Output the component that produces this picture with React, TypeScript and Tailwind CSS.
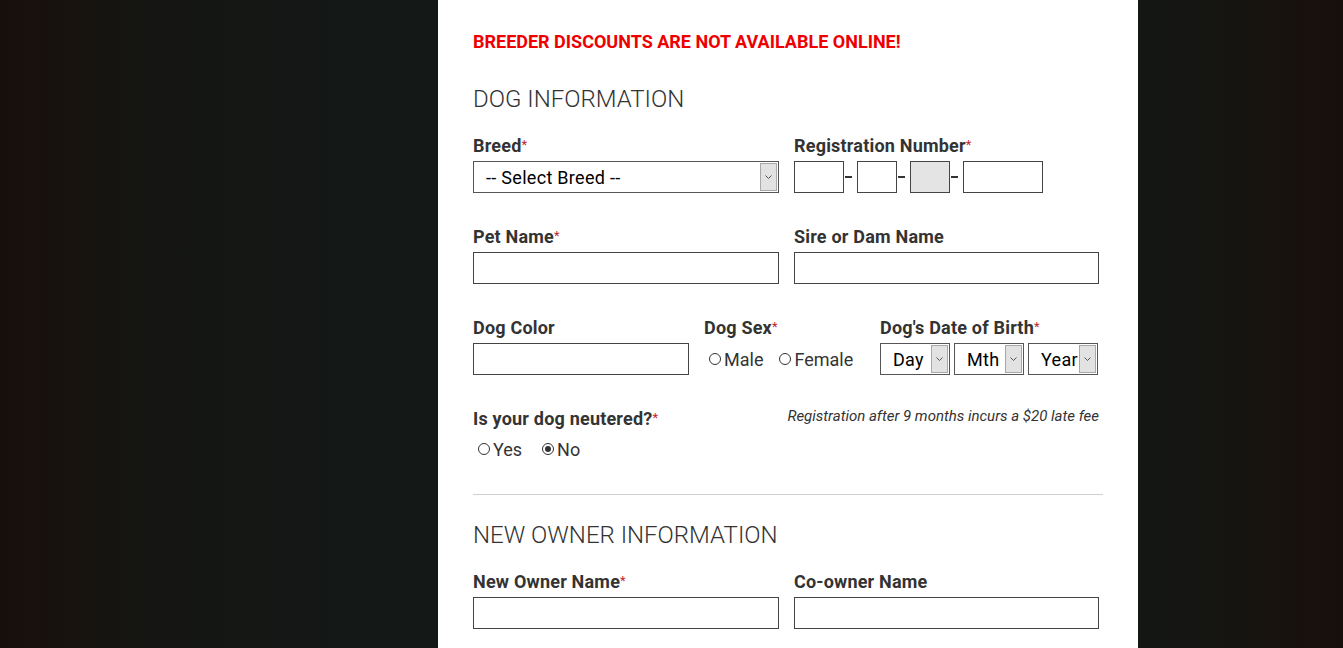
import React from 'react';

const font = { fontFamily: 'Roboto, "Noto Sans", sans-serif' };

function Req() {
  return <span className="text-[#c4262e] text-[13px] align-top relative top-[-1px] font-normal">*</span>;
}

function Label({ text, req }: { text: string; req?: boolean }) {
  return (
    <div className="h-5 leading-5 pt-px text-[18px] font-bold text-[#333] whitespace-nowrap tracking-[0.2px]">
      {text}
      {req && <Req />}
    </div>
  );
}

function TextBox({ className = '' }: { className?: string }) {
  return <div className={`h-8 border border-[#444] bg-white ${className}`} />;
}

function SelectBox({ text, className = '', pad = 'pl-3' }: { text: string; className?: string; pad?: string }) {
  return (
    <div className={`h-8 border border-[#555] bg-white flex items-stretch ${className}`}>
      <div className={`flex-1 flex items-center text-[18px] text-black tracking-[0.3px] ${pad}`}>{text}</div>
      <div className="w-[17px] my-px mr-px bg-[#e2e2e2] border border-[#a8a8a8] flex items-center justify-center">
        <svg width="7" height="4" viewBox="0 0 7 4" fill="none">
          <path d="M0.5 0.5L3.5 3.5L6.5 0.5" stroke="#555" strokeWidth="1" />
        </svg>
      </div>
    </div>
  );
}

function Radio({ label, checked }: { label: string; checked?: boolean }) {
  return (
    <div className="flex items-center text-[18px] text-[#333]">
      <span className="w-3 h-3 rounded-full border border-[#333] flex items-center justify-center mr-[3px]">
        {checked && <span className="w-[6px] h-[6px] rounded-full bg-[#333]" />}
      </span>
      {label}
    </div>
  );
}

function Dash() {
  return <div className="w-[13px] flex items-center"><div className="ml-px w-[7px] h-[2px] bg-[#333]" /></div>;
}

export default function App() {
  return (
    <div
      className="min-h-[648px] w-full flex pl-[438px] bg-[linear-gradient(to_right,#180f0b_0%,#151613_11%,#141817_28%,#141817_72%,#151613_89%,#180f0b_100%)]"
      style={font}
    >
      <div className="w-[700px] bg-white px-[35px] pt-[32px] pb-5">
        <div className="h-5 leading-5 text-[18px] font-bold text-[#ee0000]">BREEDER DISCOUNTS ARE NOT AVAILABLE ONLINE!</div>

        <h2 className="mt-[31px] h-8 leading-8 text-[24px] font-light text-[#333]">DOG INFORMATION</h2>

        <div className="mt-5 grid grid-cols-[306px_305px] gap-x-[15px]">
          <div>
            <Label text="Breed" req />
            <SelectBox text="-- Select Breed --" className="mt-[6px]" />
          </div>
          <div>
            <Label text="Registration Number" req />
            <div className="mt-[6px] flex">
              <TextBox className="w-[50px]" />
              <Dash />
              <TextBox className="w-[40px]" />
              <Dash />
              <div className="h-8 w-[40px] border border-[#444] bg-[#e4e4e4]" />
              <Dash />
              <TextBox className="w-[80px]" />
            </div>
          </div>
        </div>

        <div className="mt-[33px] grid grid-cols-[306px_305px] gap-x-[15px]">
          <div>
            <Label text="Pet Name" req />
            <TextBox className="mt-[6px]" />
          </div>
          <div>
            <Label text="Sire or Dam Name" />
            <TextBox className="mt-[6px]" />
          </div>
        </div>

        <div className="mt-[33px] flex">
          <div className="w-[216px]">
            <Label text="Dog Color" />
            <TextBox className="mt-[6px]" />
          </div>
          <div className="ml-[15px] w-[176px]">
            <Label text="Dog Sex" req />
            <div className="mt-[6px] h-8 flex items-center gap-[16px] pl-[5px]">
              <Radio label="Male" />
              <Radio label="Female" />
            </div>
          </div>
          <div className="w-[219px]">
            <Label text="Dog's Date of Birth" req />
            <div className="mt-[6px] flex gap-1">
              <SelectBox text="Day" className="w-[70px]" />
              <SelectBox text="Mth" className="w-[70px]" />
              <SelectBox text="Year" className="w-[70px]" />
            </div>
          </div>
        </div>

        <div className="mt-[33px] flex justify-between">
          <div>
            <Label text="Is your dog neutered?" req />
            <div className="mt-[11px] h-5 flex items-center gap-5 pl-[5px]">
              <Radio label="Yes" />
              <Radio label="No" checked />
            </div>
          </div>
          <div className="mr-[4px] h-4 leading-4 text-[15px] italic text-[#333]">Registration after 9 months incurs a $20 late fee</div>
        </div>

        <div className="mt-[35px] h-px bg-[#cfcfcf]" />

        <h2 className="mt-[24px] h-8 leading-8 text-[24px] font-light text-[#333]">NEW OWNER INFORMATION</h2>

        <div className="mt-5 grid grid-cols-[306px_305px] gap-x-[15px]">
          <div>
            <Label text="New Owner Name" req />
            <TextBox className="mt-[6px]" />
          </div>
          <div>
            <Label text="Co-owner Name" />
            <TextBox className="mt-[6px]" />
          </div>
        </div>
      </div>
    </div>
  );
}
